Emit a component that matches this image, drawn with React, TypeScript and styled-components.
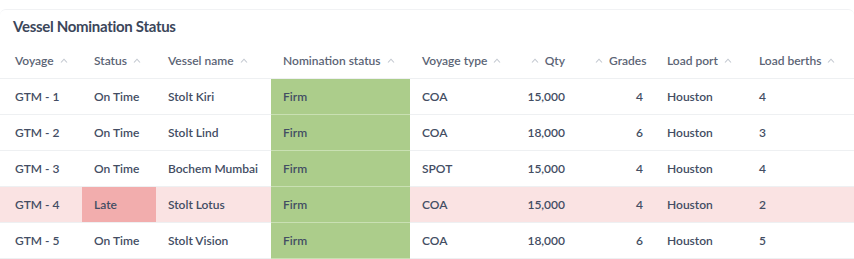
import React from "react";
import styled, { createGlobalStyle } from "styled-components";

const GlobalStyle = createGlobalStyle`
  html, body {
    margin: 0;
    padding: 0;
    background: #ffffff;
    font-family: Lato, "Open Sans", sans-serif;
  }
`;

const Card = styled.div`
  margin-top: 9px;
  width: 854px;
  box-sizing: border-box;
  border-top: 1px solid #f1f2f4;
  border-radius: 6px 6px 0 0;
  background: #ffffff;
`;

const Title = styled.h2`
  margin: 0;
  padding: 7px 13px 0;
  height: 32px;
  box-sizing: border-box;
  font-size: 15px;
  font-weight: 700;
  letter-spacing: -0.3px;
  color: #3b465a;
`;

const Table = styled.table`
  border-collapse: collapse;
  table-layout: fixed;
  width: 854px;
`;

const HeadCell = styled.th<{ $right?: boolean; $first?: boolean }>`
  height: 35px;
  padding: 1px 12px 0 ${({ $first }) => ($first ? "15px" : "12px")};
  text-align: ${({ $right }) => ($right ? "right" : "left")};
  font-size: 12px;
  font-weight: 600;
  color: #5b6475;
  white-space: nowrap;
  border-bottom: 1px solid #eef0f2;
`;

const Arrow = styled.svg`
  width: 8px;
  height: 5px;
  margin: 0 6px;
  vertical-align: 2px;
`;

const Row = styled.tr<{ $late?: boolean }>`
  background: ${({ $late }) => ($late ? "#fae3e3" : "transparent")};
`;

const Cell = styled.td<{ $right?: boolean; $first?: boolean; $tone?: "green" | "red" }>`
  height: 35px;
  padding: 0 12px 0 ${({ $first }) => ($first ? "15px" : "12px")};
  text-align: ${({ $right }) => ($right ? "right" : "left")};
  font-size: 12px;
  font-weight: 600;
  color: #434d63;
  white-space: nowrap;
  border-bottom: 1px solid
    ${({ $tone }) => ($tone === "green" ? "#c9e0b3" : "#eef0f2")};
  background: ${({ $tone }) =>
    $tone === "green" ? "#accd8b" : $tone === "red" ? "#f2adad" : "transparent"};
`;

const columns = [
  { label: "Voyage", width: 82 },
  { label: "Status", width: 74 },
  { label: "Vessel name", width: 115 },
  { label: "Nomination status", width: 139 },
  { label: "Voyage type", width: 90 },
  { label: "Qty", width: 77, right: true },
  { label: "Grades", width: 78, right: true },
  { label: "Load port", width: 92 },
  { label: "Load berths", width: 107 },
];

const rows = [
  { voyage: "GTM - 1", status: "On Time", vessel: "Stolt Kiri", type: "COA", qty: "15,000", grades: 4, berths: 4 },
  { voyage: "GTM - 2", status: "On Time", vessel: "Stolt Lind", type: "COA", qty: "18,000", grades: 6, berths: 3 },
  { voyage: "GTM - 3", status: "On Time", vessel: "Bochem Mumbai", type: "SPOT", qty: "15,000", grades: 4, berths: 4 },
  { voyage: "GTM - 4", status: "Late", vessel: "Stolt Lotus", type: "COA", qty: "15,000", grades: 4, berths: 2 },
  { voyage: "GTM - 5", status: "On Time", vessel: "Stolt Vision", type: "COA", qty: "18,000", grades: 6, berths: 5 },
];

const SortArrow = () => (
  <Arrow viewBox="0 0 8 5">
    <path d="M1 4.5 L4 1.2 L7 4.5" fill="none" stroke="#c3c8d0" strokeWidth="1.1" />
  </Arrow>
);

export default function App() {
  return (
    <>
      <GlobalStyle />
      <Card>
        <Title>Vessel Nomination Status</Title>
        <Table>
          <colgroup>
            {columns.map((c) => (
              <col key={c.label} style={{ width: c.width }} />
            ))}
          </colgroup>
          <thead>
            <tr>
              {columns.map((c, i) => (
                <HeadCell key={c.label} $right={c.right} $first={i === 0}>
                  {c.right && <SortArrow />}
                  {c.label}
                  {!c.right && <SortArrow />}
                </HeadCell>
              ))}
            </tr>
          </thead>
          <tbody>
            {rows.map((r) => {
              const late = r.status === "Late";
              return (
                <Row key={r.voyage} $late={late}>
                  <Cell $first>{r.voyage}</Cell>
                  <Cell $tone={late ? "red" : undefined}>{r.status}</Cell>
                  <Cell>{r.vessel}</Cell>
                  <Cell $tone="green">Firm</Cell>
                  <Cell>{r.type}</Cell>
                  <Cell $right>{r.qty}</Cell>
                  <Cell $right>{r.grades}</Cell>
                  <Cell>Houston</Cell>
                  <Cell>{r.berths}</Cell>
                </Row>
              );
            })}
          </tbody>
        </Table>
      </Card>
    </>
  );
}
